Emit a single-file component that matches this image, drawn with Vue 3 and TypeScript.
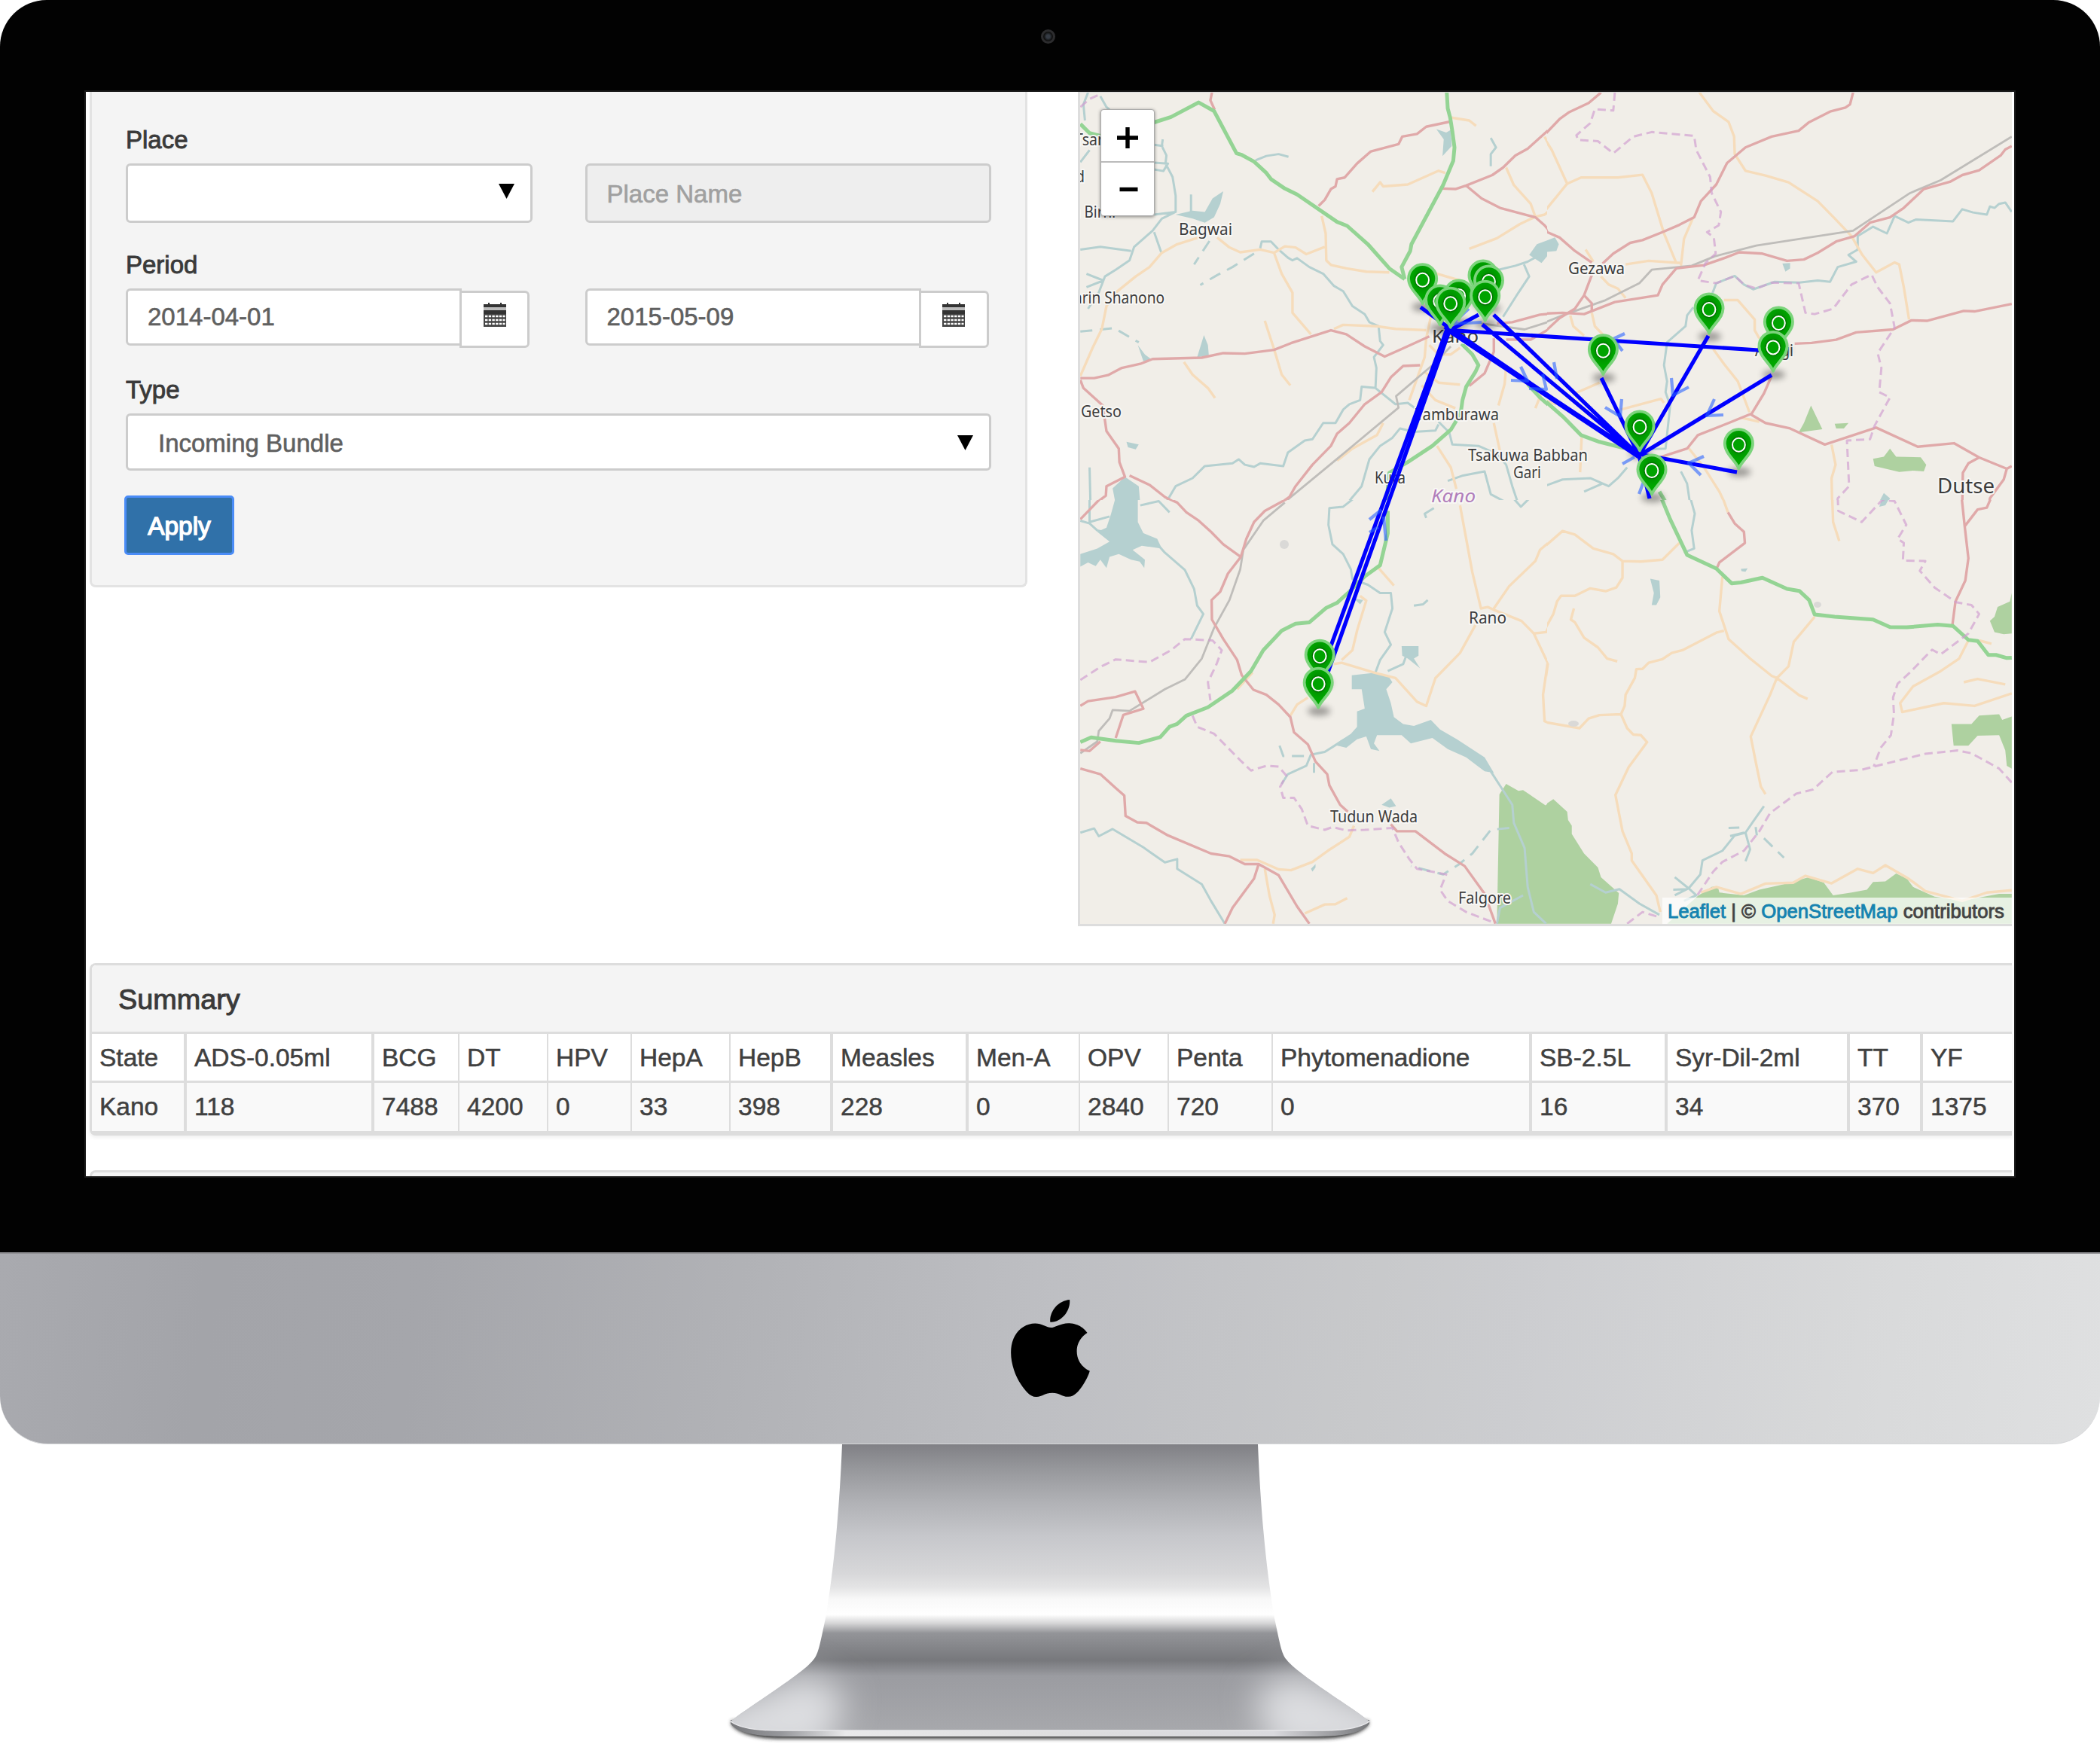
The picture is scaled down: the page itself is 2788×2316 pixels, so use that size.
<script setup lang="ts">
interface Column { name: string; value: string; width: number; thin?: boolean }
interface Tile { id: string; x: number; y: number; sy: number; layers: Record<string, string> }
interface Place { text: string; x: number; y: number; w: number; size?: number; kind?: string }

const columns: Column[] = [
  { name: 'State', value: 'Kano', width: 126 },
  { name: 'ADS-0.05ml', value: '118', width: 249 },
  { name: 'BCG', value: '7488', width: 113, thin: true },
  { name: 'DT', value: '4200', width: 118, thin: true },
  { name: 'HPV', value: '0', width: 111, thin: true },
  { name: 'HepA', value: '33', width: 131, thin: true },
  { name: 'HepB', value: '398', width: 136 },
  { name: 'Measles', value: '228', width: 180 },
  { name: 'Men-A', value: '0', width: 148, thin: true },
  { name: 'OPV', value: '2840', width: 118, thin: true },
  { name: 'Penta', value: '720', width: 138, thin: true },
  { name: 'Phytomenadione', value: '0', width: 344 },
  { name: 'SB-2.5L', value: '16', width: 180 },
  { name: 'Syr-Dil-2ml', value: '34', width: 242 },
  { name: 'TT', value: '370', width: 97 },
  { name: 'YF', value: '1375', width: 118 },
]

// Each tile keeps its own local grid; layers are painted in this order.
const layerOrder = ['forest', 'lake', 'river', 'stream', 'minor', 'rail', 'major', 'trunk', 'border']

const tiles: Tile[] = [
  {
    id: 'nw', x: 1420, y: 110, sy: 0.35714,
    layers: {
      lake: 'M345 490L400 475L440 480L465 430L500 403L490 450L470 500L440 520L400 505ZM1193 172L1225 185L1240 175L1243 235L1213 272L1217 210ZM437 938L450 975L453 1015L415 1020ZM222 975L245 1010L268 1030L240 1035ZM185 1335L225 1345L215 1363L190 1355ZM140 1508L180 1465L225 1500L230 1568L150 1568ZM1495 640L1520 600L1568 580L1568 625L1535 670Z',
      river: 'M60 36L45 80L50 140M100 50L120 90L130 100M605 288L640 272L680 265L712 275M1370 205L1387 240L1370 265L1370 310M303 210L300 235L315 270L312 300L335 350L345 420L345 480L300 505L270 550L210 610L195 660L150 695L115 720L95 780L60 840M275 490L345 480M35 620L100 610L200 625M275 555L298 630M55 710L110 735L55 760M395 415L395 480M275 230L305 235M275 297L320 300L305 328L275 322M35 295L65 250M620 615L625 590L655 590L680 620L710 650L725 660L740 652L780 685L825 710L860 755L890 775L920 830L960 860L975 890L1005 905L1010 960L1020 975L990 1020L998 1060L995 1135L1060 1195L1100 1190L1130 1215M998 1135L950 1130L945 1180L910 1195L890 1215L865 1265L825 1265L790 1325L765 1330L710 1375L695 1425L620 1415L600 1428L570 1420L550 1400L530 1415L440 1425L400 1470L345 1500L310 1568M1200 1270L1190 1293L1120 1298L1075 1285L1050 1320L1010 1350L975 1400L950 1500L900 1568M1200 1260L1235 1300L1245 1345L1330 1350L1390 1380L1420 1420L1440 1500L1460 1568M1230 1480L1280 1460L1350 1445L1370 1530L1420 1560M65 1430L68 1568M1395 695L1450 680L1490 665L1530 640M1478 675L1495 720L1460 780L1410 870',
      stream: 'M455 588L405 675M600 635L530 685L480 715L425 752M35 925L145 912L225 965',
      minor: 'M35 1090L75 985L105 915L120 830L150 780L215 720L260 685L300 632L350 600L420 575M480 575L520 612L555 630L620 620L665 632L700 608L735 612L770 637L830 610M820 495L833 560L835 660L850 677L900 690L965 702L1040 705M665 632L690 710L725 780L725 855L785 935M635 885L665 990L690 1085L718 1125M372 1038L400 1085L450 1135L473 1172M860 915L890 900L1000 905L1060 915L1160 920M985 405L1010 370L1020 385L1100 378L1200 327L1222 335M1235 128L1300 140L1322 160M1420 315L1445 380L1500 450L1515 498L1545 490L1568 468M1515 498L1465 525L1390 578L1300 617M1545 200L1568 250M1190 708L1270 735M1175 870L1160 950L1155 1020L1105 1180M1155 1075L1200 1115L1270 1122M1145 1125L1190 1180L1255 1210M1420 1055L1415 1120L1395 1200M1380 1265L1400 1370M1195 1350L1240 1430L1258 1510M870 1405L920 1360L1000 1310L1020 1265M1270 985L1240 1010L1200 1010L1170 975M1540 1140L1515 1210',
      rail: 'M1240 980L1180 1050L1062 1165L1070 1208L900 1370L690 1568M1340 895L1480 917L1568 885',
      major: 'M463 36L458 65L472 100M810 458L830 435L850 395L865 385L870 358L895 352L935 300L980 255L1070 228L1082 200L1130 190L1160 163L1235 145M1210 393L1255 395L1290 382L1375 343L1410 315L1450 270L1490 245L1568 165M1290 382L1340 430L1400 465L1515 500L1545 530L1568 562M35 1098L80 1098L125 1087L170 1060L230 1045L270 1027L430 1022L500 1005L570 1007L665 993L720 968L850 920L900 935L960 980L1025 1018L1080 990L1170 943M1390 895L1440 890L1530 862L1568 858M35 1105L45 1135L108 1200L120 1295L160 1360L162 1410L180 1465L120 1500L118 1535L80 1568M195 1460L260 1495L310 1540L355 1568M1140 1050L1085 1053L1045 1095L1015 1150L960 1195L910 1265L870 1305L850 1350L790 1420L735 1500L715 1540L680 1568M1380 950L1380 1000L1350 1080L1300 1127M1568 910L1500 955L1420 955',
      trunk: 'M275 147L330 127L420 73L470 105L543 262L560 268L600 293L640 335L655 358L700 393L740 415L870 517L903 532L970 600L1040 690L1090 730M1227 36L1230 95L1238 130L1245 180L1252 240L1248 290L1215 380L1112 600L1108 625L1080 685L1090 730M35 153L65 187L100 197M1275 970L1310 1010L1330 1050L1320 1075L1290 1130L1278 1180L1272 1230L1240 1290L1180 1350L1100 1410L1040 1450L1030 1568M1490 1120L1530 1170L1568 1208',
      border: 'M35 90L65 60L100 42',
    },
  },
  {
    id: 'ne', x: 2050, y: 110, sy: 0.35714,
    layers: {
      forest: 'M868 1200L905 1288L828 1300L845 1265ZM945 1268L990 1265L975 1285L950 1285ZM1070 1398L1105 1390L1125 1360L1145 1390L1225 1392L1243 1420L1235 1445L1200 1442L1155 1447L1075 1425Z',
      lake: 'M0 590L35 575L48 600L40 625L0 630ZM775 672L800 670L800 690L785 702ZM1085 1568L1105 1525L1125 1545L1115 1568Z',
      river: 'M1521 480L1500 445L1480 450L1465 465L1450 460L1440 490L1395 482L1360 470L1330 515L1210 508L1185 520L1140 495L1115 560L1070 535L1020 570L1020 620L990 640L1015 665L955 685L930 740L890 735L830 743L750 740L680 768L650 750L620 718L560 745L545 790M485 835L465 865L460 905L400 965L390 1050L400 1110L395 1150L410 1200L395 1360L350 1362M270 1430L240 1470L210 1500L150 1470L60 1475L0 1500M130 1520L190 1490M445 1445L465 1490L475 1568',
      minor: 'M505 36L550 105L600 145L618 200L620 265L655 327L720 345L795 370L890 440L950 510L1000 570L1035 640L1080 705L1140 668L1155 675L1170 760L1187 880M0 205L25 250L75 375L120 352L240 352L320 342L350 410L390 560L430 670M0 480L75 375M485 500L455 580L445 680M265 675L340 662L445 670M135 620L160 665M185 720L210 750L240 765L265 800M85 865L95 905L130 940M155 855L165 905L190 935M585 808L630 808L685 880L685 920L700 950M550 990L585 1045L630 1110L668 1225M100 1155L180 1115M250 1215L380 1175L390 1190M0 1180L40 1195M640 1245L700 1260M935 1345L948 1420L935 1470L937 1568M470 1358L520 1430L570 1520L590 1568M122 1320L117 1448',
      rail: 'M1521 200L1290 362L1190 410L1005 550L690 605L555 645L480 680L350 695L310 745L200 808L60 865L0 892',
      major: 'M185 36L145 75L80 110L50 135L0 195M1005 36L995 80L980 92L930 107L860 148L828 178L740 200L655 240L595 298L560 378L510 440L488 500L440 528L385 555L320 585L280 595L225 635L190 672M0 525L10 555L50 575L100 625L155 668M155 715L130 790L100 840L50 875L0 928M130 790L155 820L155 850M0 858L60 855L130 860L230 815L370 790L385 750L430 690L520 678L590 650L635 630L710 635L790 662L845 657L890 632L950 590L1010 570L1060 520L1125 500L1170 465L1235 395L1320 368L1360 343L1415 325L1485 270L1500 248L1521 235M815 970L870 967L950 955L1015 928L1135 917L1195 883L1245 885L1365 848L1400 850L1521 822M740 1090L715 1155L675 1230L600 1265L500 1310L465 1360L370 1395M675 1235L720 1265L800 1285L913 1345L1080 1282L1215 1353L1333 1340L1415 1393L1505 1435L1521 1425M1415 1393L1380 1415L1362 1450L1360 1568M1505 1435L1495 1475L1450 1545L1448 1568',
      trunk: 'M0 1180L60 1240L120 1310L180 1335L260 1358M375 1520L400 1568',
      border: 'M230 36L225 103L165 98L150 150L105 195L110 212L175 217L225 262L290 200L350 183L488 197L495 250L540 350L545 410L575 480L568 530L530 555L552 575L558 635L525 670L500 735L560 745L620 718L650 750L690 765L740 743L828 745L850 855L880 860L940 840L1000 750L1065 713L1085 760L1125 820L1140 910L1085 1005L1097 1060L1090 1150L1125 1170L1075 1275L1060 1325L985 1330L992 1500L955 1545L953 1568',
    },
  },
  {
    id: 'sw', x: 1420, y: 660, sy: 0.3699,
    layers: {
      forest: 'M1398 1068L1420 1030L1460 1055L1475 1052L1548 1107L1568 1090L1568 1532L1390 1532Z',
      lake: 'M150 0L222 0L222 90L240 130L285 150L300 185L235 175L205 190L245 225L243 255L228 232L200 225L160 205L130 215L120 255L100 225L85 248L60 235L35 250L35 205L90 185L130 160L90 125L120 110L135 60ZM918 640L985 632L1035 640L1050 665L1030 690L1045 740L1055 790L1085 815L1120 822L1175 800L1205 835L1260 870L1350 935L1380 990L1350 985L1290 935L1230 905L1180 865L1110 885L1080 855L1000 855L990 885L1008 912L980 905L965 860L935 870L900 900L860 890L915 850L935 825L935 770L960 760L950 690L918 690ZM1080 535L1135 535L1135 570L1120 580L1140 615L1100 580L1082 570ZM1015 1105L1045 1082L1062 1110L1040 1115ZM785 1335L800 1318L800 1330L790 1345ZM925 365L955 370L945 385Z',
      river: 'M930 0L890 35L845 40L842 100L855 170L890 205L915 260L920 295L970 315L1010 345L1045 345L1050 400L1025 485L1045 530L1010 585L995 630M1185 40L1155 60L1160 75M1120 390L1150 385L1165 370M270 150L310 200L375 262L405 330L415 390L435 420L395 510M230 30L290 15L325 55M35 85L65 95L90 120L130 130M65 0L65 90L130 70M35 1205L80 1190L95 1218L140 1192L240 1258L310 1312L350 1300L350 1335L430 1390L460 1450L505 1532M895 870L830 915L785 925L770 965L710 995L690 1030M795 955L795 990M1370 985L1405 1045L1440 1105L1445 1170L1480 1260L1490 1400L1510 1490L1550 1532M1035 625L1085 600L1095 570M1375 0L1440 0L1468 35L1500 0M1390 1532L1400 1475L1475 1430',
      stream: 'M683 893L695 930L765 930M1430 1188L1370 1195L1310 1280L1265 1320L1215 1355L1110 1325',
      minor: 'M1270 30L1285 120L1310 270L1338 400L1360 395L1380 405L1470 445L1510 490L1555 595L1540 710L1545 805L1568 815M1380 400L1430 320L1515 230L1530 190L1568 155M1510 490L1550 485L1568 445M1320 460L1270 560L1190 650L1160 750L1130 735L1060 650L990 630L885 595L860 600M945 355L965 372L935 480L920 550L885 585M775 720L740 745L718 785M1005 255L1055 318M595 630L545 690M555 1303L610 1303L680 1337L720 1340L790 1310L840 1270L910 1220L925 1180M635 1335L650 1430L667 1500L662 1532M765 1495L830 1463L865 1462L903 1440',
      rail: 'M700 20L630 85L565 190L555 260L520 370L470 470L430 580L375 655L310 690L195 768L140 765L130 795L95 840L90 878L35 920',
      major: 'M310 0L350 20L380 55L420 85L460 125L500 170L557 215M105 0L35 80M718 0L635 50L600 90L575 150L557 215L515 275L490 340L462 370L463 440L500 510L545 585L560 640L598 692L640 710L680 745L718 790L730 845L775 888L800 950L838 995L845 1035L880 1105L905 1130M1045 1175L1065 1200L1125 1200L1220 1280L1285 1325L1350 1425L1385 1532M35 975L100 995L150 1045L178 1072L182 1145L220 1168L250 1170L320 1215L460 1280L520 1290L570 1318L615 1318L680 1358L740 1470L780 1532M615 1318L600 1370L530 1475L505 1532M35 750L60 733L150 718L213 698L240 760L175 782L150 865M100 878L65 912L35 908',
      trunk: 'M1035 50L1035 130L1010 245L960 285L910 340L870 380L835 398L780 450L735 455L690 480L630 550L590 625L530 695L450 755L380 785L350 815L325 825L295 862L225 883L150 875L70 863L35 880',
      border: 'M35 657L100 610L150 583L260 593L330 550L375 510L465 515L495 550L478 600L450 665L458 730M400 785L415 825L470 850L555 945L590 982L640 965L680 968L705 1000L685 1040L695 1080L730 1080L755 1120L775 1180L830 1195L855 1185L900 1197L960 1195L1050 1188L1070 1240L1105 1300L1130 1335L1225 1355L1205 1410L1230 1450L1290 1490L1385 1530',
    },
  },
  {
    id: 'se', x: 2050, y: 660, sy: 0.3699,
    layers: {
      forest: 'M0 1107L30 1085L75 1130L78 1160L90 1180L90 1210L130 1280L175 1330L185 1365L243 1422L240 1460L218 1532L0 1532ZM1521 345L1515 375L1475 395L1465 430L1450 445L1465 485L1495 493L1521 490ZM1325 815L1390 815L1415 785L1480 780L1490 800L1521 788L1521 975L1505 965L1500 910L1480 855L1410 857L1380 893L1332 893ZM500 1432L545 1400L565 1398L570 1420L650 1430L700 1410L780 1390L860 1365L910 1385L940 1430L1000 1420L1050 1410L1070 1382L1110 1380L1145 1352L1180 1370L1200 1400L1270 1435L1360 1450L1480 1425L1521 1425L1521 1532L400 1532Z',
      lake: 'M345 293L375 300L378 360L365 388L350 388L357 345ZM640 258L662 256L655 268L642 266ZM1090 35L1100 5L1125 0L1110 30Z',
      river: 'M475 0L490 60L480 120L488 185L455 200M715 1110L680 1165L655 1205L620 1215L580 1270L515 1305L508 1355L470 1405L425 1430M655 1205L670 1265L655 1308M600 1188L635 1187M605 1217L650 1205M688 1185L692 1215M425 1365L470 1405L495 1430L455 1450M420 1410L465 1408M150 1390L200 1420L245 1408L310 1460L375 1500',
      stream: 'M715 1225L780 1295',
      minor: 'M0 180L60 122L100 135L160 185L225 205L255 230L315 232L385 225L440 165M255 230L255 290L235 325L200 338L150 328L100 355L55 355L42 375L30 420L0 480M97 400L87 440L100 450L130 505L175 540L205 580L238 590M580 0L598 55M580 285L570 410L600 510L670 580L740 642L757 650L830 712L857 725M585 480L560 487L450 550L415 560L385 582L340 595L320 617L300 618L295 650L265 710L262 750L250 780L180 783L145 795L115 830L0 808M250 780L270 830L290 853L315 855L335 880L275 970L232 1070L255 1200L285 1280L285 1305L365 1430L378 1490M880 430L812 520L795 608L757 650L735 710L672 860L690 960L705 1040L720 1067M937 0L940 90L960 158M1380 515L1350 580L1290 625L1200 680L1158 740L1165 772L1300 740L1400 750L1521 705M1365 665L1410 653L1500 673M1415 515L1455 527M510 1420L560 1400L640 1425L720 1388L810 1385L850 1360L935 1387L1020 1335L1070 1350L1110 1322L1185 1370L1240 1415L1360 1450L1440 1420L1521 1412M0 575L12 600L0 690L5 740L0 808',
      major: 'M598 55L620 95L650 125L653 165L570 235L562 255M1358 0L1368 105L1380 220L1370 300L1338 375L1328 460M1455 0L1440 38L1410 45L1368 105',
      trunk: 'M380 0L410 80L465 208L560 257L610 310L640 307L710 290L790 330L830 337L862 370L880 422L945 430L1070 440L1125 467L1180 468L1280 458L1330 463L1380 513L1410 517L1445 567L1470 567L1505 578L1521 577',
      border: 'M955 0L957 50L1033 90L1100 10L1140 15L1178 100L1150 150L1170 165L1167 228L1240 230L1222 265L1270 325L1340 378L1390 388L1415 420L1380 490L1290 565L1262 548L1190 630L1150 670L1135 720L1138 780L1128 855L1095 900L1072 968M1521 1025L1480 975L1390 920L1345 910L1240 922L1072 968L1030 980L938 987L875 1050L820 1065L735 1135L700 1200L650 1270L580 1310L550 1345L495 1435M270 1532L320 1490L378 1510',
    },
  },
]

const places: Place[] = [
  { text: 'Tsan', x: 1427, y: 193, w: 42 },
  { text: 'd', x: 1428, y: 242, w: 12 },
  { text: 'n Birni', x: 1423, y: 288.5, w: 58 },
  { text: 'Bagwai', x: 1565, y: 312, w: 71 },
  { text: 'arin Shanono', x: 1426, y: 403, w: 120 },
  { text: 'Getso', x: 1435, y: 553.5, w: 54 },
  { text: 'Tamburawa', x: 1879, y: 557.5, w: 111 },
  { text: 'Kura', x: 1825, y: 641.5, w: 41 },
  { text: 'Kano', x: 1901, y: 455, w: 62, size: 24 },
  { text: 'Tsakuwa Babban', x: 1949, y: 612, w: 159 },
  { text: 'Gari', x: 2009, y: 635, w: 37 },
  { text: 'Kano', x: 1900, y: 667, w: 59, size: 24, kind: 'region' },
  { text: 'Gezawa', x: 2082, y: 363.5, w: 75 },
  { text: 'Ajingi', x: 2330, y: 473, w: 51 },
  { text: 'Dutse', x: 2572, y: 654.5, w: 76, size: 28 },
  { text: 'Rano', x: 1950, y: 827.5, w: 50 },
  { text: 'Tudun Wada', x: 1766, y: 1091.5, w: 116 },
  { text: 'Falgore', x: 1936, y: 1200, w: 70 },
]

const routes =
  'M1918 438L2350 466M2268 446L2176 605M2352 498L2176 605M2126 502L2176 605M2306 627L2176 603M2190 662L2176 605' +
  'M1918 434L2176 605M1926 441L2176 607M1886 408L1926 437L2176 607M1968 431L2176 605M1983 418L2176 605' +
  'M1926 438L1963 418M1748 935L1924 440M1747 912L1920 440'

const arrows =
  'M2157 443L2142 450L2154 466M2219 502L2221 525L2242 514M2276 530L2266 552L2288 551M2131 541L2151 553L2153 530' +
  'M2262 606L2242 615L2258 631M2176 656L2182 640M2063 481L2067 503M2154 616L2170 607M2006 505L2028 506L2019 487' +
  'M2030 516L2053 517L2048 497M1950 410L1928 430L1967 428M1818 690L1834 677M1818 707L1830 700M1840 718L1837 686'

const pins: [number, number][] = [
  [1888.6, 371.8], [1969, 367], [1976.5, 374], [1936.7, 393], [1911.7, 400], [1971.7, 394.3], [1925.7, 403.3],
  [2269, 411], [2128.4, 465.7], [2361.4, 429], [2354, 461.4], [2177, 567], [2308.4, 590.7], [2193, 625],
  [1752.2, 871.2], [1750.2, 908.2],
]
</script>

<template>
  <div class="imac">
    <div class="bezel">
      <i class="camera"></i>
      <div class="screen">
        <div class="top">
          <form class="filters">
            <div class="group">
              <label>Place</label>
              <div class="fields">
                <div class="control half tall"><svg class="caret" viewBox="0 0 21 20"><path d="M0 0H21L10.5 20Z" /></svg></div>
                <div class="control half tall disabled">Place Name</div>
              </div>
            </div>
            <div class="group">
              <label>Period</label>
              <div class="fields">
                <div v-for="d in ['2014-04-01', '2015-05-09']" :key="d" class="date">
                  <div class="control">{{ d }}</div>
                  <div class="picker">
                    <svg viewBox="0 0 30 32">
                      <path fill="#333" d="M0 2H6V0H8V2H22V0H24V2H30V6H0Z" />
                      <path fill="#bbb" d="M0 6H30V10H0Z" />
                      <path fill="#333" d="M0 10H30V15H0Z" />
                      <path fill="#444" d="M0 15H30V32H0Z" />
                      <path stroke="#fff" stroke-width="2.6" stroke-dasharray="3.4 1.3" d="M2 18H28.5M2 23H28.5M2 28H28.5" />
                    </svg>
                  </div>
                </div>
              </div>
            </div>
            <div class="group last">
              <label>Type</label>
              <div class="control type">Incoming Bundle<svg class="caret" viewBox="0 0 21 20"><path d="M0 0H21L10.5 20Z" /></svg></div>
            </div>
            <button type="button">Apply</button>
          </form>

          <div class="map">
            <svg class="canvas" viewBox="1434 123 1237 1104">
              <defs>
                <filter id="soft" x="-50%" y="-80%" width="200%" height="260%"><feGaussianBlur stdDeviation="4" /></filter>
                <radialGradient id="pinFill" cx=".5" cy=".38" r=".5">
                  <stop offset=".35" stop-color="#008f00" /><stop offset=".8" stop-color="#00a600" />
                </radialGradient>
                <clipPath v-for="t in tiles" :id="'clip-' + t.id" :key="t.id">
                  <rect :x="t.id[1] === 'w' ? 1420 : 2054" :y="t.id[0] === 'n' ? 110 : 664" width="634" :height="t.id[0] === 'n' ? 554 : 572" />
                </clipPath>
              </defs>
              <template v-for="layer in layerOrder" :key="layer">
                <g v-for="t in tiles" :key="t.id" :clip-path="`url(#clip-${t.id})`">
                  <path
                    v-if="t.layers[layer]" :class="layer" :d="t.layers[layer]" vector-effect="non-scaling-stroke"
                    :transform="`translate(${t.x} ${t.y}) scale(.40816 ${t.sy})`"
                  />
                </g>
              </template>
              <g fill="#dad9d7">
                <ellipse cx="1705" cy="723" rx="6" ry="6" /><ellipse cx="2089" cy="961" rx="7" ry="4" /><ellipse cx="2413" cy="803" rx="5" ry="4" />
              </g>
              <text
                v-for="p in places" :key="p.text + p.y" :class="['place', p.kind]" :x="p.x" :y="p.y"
                :textLength="p.w" lengthAdjust="spacingAndGlyphs" :font-size="p.size ?? 21"
              >{{ p.text }}</text>
              <ellipse v-for="(p, i) in pins" :key="'s' + i" :cx="p[0] + 1" :cy="p[1] + 36" rx="15" ry="6" fill="#000" opacity=".36" filter="url(#soft)" />
              <path class="route" :d="routes" />
              <path class="arrow" :d="arrows" />
              <path class="route" d="M1749 930V936" />
              <g v-for="(p, i) in pins" :key="i" :transform="`translate(${p[0]} ${p[1]})`">
                <path fill="url(#pinFill)" stroke="#7cd47c" stroke-width="3.8" d="M0 31.5C-3 22-18.6 12-18.6-1.6A18.6 19 0 0 1 18.6-1.6C18.6 12 3 22 0 31.5Z" />
                <ellipse rx="9" ry="9.6" fill="#0a0" stroke="#006d00" stroke-width="3.4" opacity=".75" />
                <ellipse rx="8.4" ry="9" fill="#00a300" stroke="#fff" stroke-width="2" />
              </g>
            </svg>
            <div class="zoom">
              <span><svg viewBox="0 0 28 28"><path d="M0 14H28M14 0V28" /></svg></span>
              <span><svg viewBox="0 0 28 28"><path d="M3.5 13.5H27.5" /></svg></span>
            </div>
            <div class="credit"><a>Leaflet</a> | © <a>OpenStreetMap</a> contributors</div>
          </div>
        </div>

        <section class="summary">
          <h3>Summary</h3>
          <table>
            <colgroup><col v-for="c in columns" :key="c.name" :style="{ width: c.width + 'px' }" /></colgroup>
            <tbody>
              <tr><td v-for="c in columns" :key="c.name" :class="{ thin: c.thin }">{{ c.name }}</td></tr>
              <tr class="odd"><td v-for="c in columns" :key="c.name" :class="{ thin: c.thin }">{{ c.value }}</td></tr>
            </tbody>
          </table>
        </section>
        <section class="next"></section>
      </div>
    </div>
    <div class="chin">
      <svg viewBox="2.2 0 19.6 24" preserveAspectRatio="none">
        <path d="M12.152 6.896c-.948 0-2.415-1.078-3.96-1.04-2.04.027-3.91 1.183-4.961 3.014-2.117 3.675-.546 9.103 1.519 12.09 1.013 1.454 2.208 3.09 3.792 3.039 1.52-.065 2.09-.987 3.935-.987 1.831 0 2.35.987 3.96.948 1.637-.026 2.676-1.48 3.676-2.948 1.156-1.688 1.636-3.325 1.662-3.415-.039-.013-3.182-1.221-3.22-4.857-.026-3.04 2.48-4.494 2.597-4.559-1.429-2.09-3.623-2.324-4.39-2.376-2-.156-3.675 1.09-4.61 1.09zM15.53 3.83c.843-1.012 1.4-2.427 1.245-3.83-1.207.052-2.662.805-3.532 1.818-.78.896-1.454 2.338-1.273 3.714 1.338.104 2.715-.688 3.559-1.701" />
      </svg>
    </div>
    <svg class="stand" viewBox="960 1918 868 398">
      <defs>
        <linearGradient id="neck" gradientUnits="userSpaceOnUse" x1="0" y1="1918" x2="0" y2="2298">
          <stop offset="0" stop-color="#808085" /><stop offset=".08" stop-color="#95969a" /><stop offset=".2" stop-color="#b0b1b5" />
          <stop offset=".32" stop-color="#c6c7cb" /><stop offset=".45" stop-color="#d7d7d9" /><stop offset=".5" stop-color="#e4e4e5" />
          <stop offset=".54" stop-color="#f8f8f8" /><stop offset=".595" stop-color="#fff" /><stop offset=".625" stop-color="#d6d6d7" />
          <stop offset=".66" stop-color="#939498" /><stop offset=".755" stop-color="#77787c" /><stop offset=".81" stop-color="#9b9ca1" />
          <stop offset="1" stop-color="#a7a8ac" />
        </linearGradient>
        <linearGradient id="lip" x1="0" x2="1" y1="0" y2="0">
          <stop offset="0" stop-color="#77787b" /><stop offset=".08" stop-color="#97989c" /><stop offset=".18" stop-color="#e9e9ea" />
          <stop offset=".5" stop-color="#dededf" /><stop offset=".85" stop-color="#d9d9dd" /><stop offset="1" stop-color="#77787b" />
        </linearGradient>
        <filter id="glow" x="-60%" y="-60%" width="220%" height="220%"><feGaussianBlur stdDeviation="22" /></filter>
        <filter id="floor" x="-5%" y="-60%" width="110%" height="260%"><feGaussianBlur stdDeviation="2.5" /></filter>
        <clipPath id="foot"><path d="M1118 1918H1670C1674 2015 1682 2090 1692 2149C1699 2181 1701 2196 1708 2204C1722 2223 1795 2267 1818 2286C1806 2295 1784 2298 1756 2298H1032C1004 2298 982 2295 970 2286C993 2267 1066 2223 1080 2204C1087 2196 1089 2181 1096 2149C1106 2090 1114 2015 1118 1918Z" /></clipPath>
      </defs>
      <path d="M971 2290Q985 2309 1040 2309H1748Q1803 2309 1817 2290V2285H971Z" fill="#333" filter="url(#floor)" />
      <path d="M970 2284V2289Q982 2306 1040 2306H1748Q1806 2306 1818 2289V2284Z" fill="url(#lip)" />
      <g clip-path="url(#foot)">
        <path d="M960 1918H1828V2300H960Z" fill="url(#neck)" />
        <path d="M1070 2222L930 2285L940 2330H1095L1125 2250Z" fill="#dcdde0" filter="url(#glow)" />
        <path d="M1718 2222L1858 2285L1848 2330H1693L1663 2250Z" fill="#dcdde0" filter="url(#glow)" />
      </g>
      <path d="M970 2286C982 2295 1004 2298 1032 2298H1756C1784 2298 1806 2295 1818 2286" fill="none" stroke="#e6e6e9" stroke-width="1.5" />
    </svg>
  </div>
</template>

<style>
body { margin: 0; background: #fff; }
</style>

<style scoped>
* { box-sizing: border-box; }
.imac { width: 2788px; height: 2316px; overflow: hidden; display: flex; flex-direction: column; align-items: center; background: #fff; font: 33px "Liberation Sans", Arial, sans-serif; color: #444; }
.bezel { position: relative; width: 2788px; height: 1663px; flex: none; padding: 122px 114px 101px; background: #020202; border-radius: 62px 62px 0 0; }
.camera { position: absolute; left: 1382px; top: 39px; width: 19px; height: 19px; border-radius: 50%; border: 3px solid #2c2c2e; background: radial-gradient(#353b44 0 25%, #111 60%); }
.screen { width: 2560px; height: 1440px; overflow: hidden; background: #fff; box-shadow: 0 0 0 2px #1a1a1a; }
.top { display: flex; height: 1157px; align-items: flex-start; }

.filters { width: 1245px; height: 658px; margin-left: 5px; padding: 43px 45px 0; background: #f4f4f4; border: 3px solid #e3e3e3; border-top: 0; border-radius: 0 0 8px 8px; }
.group { height: 166px; }
.group.last { height: 161px; }
label { display: block; height: 40px; line-height: 42px; margin-bottom: 12px; color: #3a3a3a; -webkit-text-stroke: .9px #3a3a3a; }
.fields { display: flex; gap: 70px; align-items: flex-start; }
.control { display: flex; align-items: center; height: 76px; padding: 0 26px; background: #fff; border: 3px solid #ccc; border-radius: 6px; color: #606060; -webkit-text-stroke: .6px; }
.half { width: 540px; }
.tall { height: 79px; }
.disabled { background: #eee; color: #a0a0a0; padding-top: 2px; }
.type { width: 1149px; padding: 4px 21px 0 40px; }
.caret { width: 21px; height: 20px; margin-left: auto; margin-bottom: 3px; }
.tall .caret { margin-right: -5px; margin-bottom: 6px; }
.date { display: flex; width: 540px; align-items: flex-start; }
.date .control { width: 446px; border-radius: 6px 0 0 6px; }
.picker { width: 93px; height: 76px; margin: 3px 0 0 -3px; padding-top: 13px; text-align: center; background: #fff; border: 3px solid #ccc; border-radius: 0 6px 6px 0; }
.picker svg { display: block; width: 30px; height: 32px; margin: 0 auto; }
button { display: block; width: 146px; height: 79px; margin-left: -2px; padding: 2px 0 0; font: 33.4px "Liberation Sans", Arial, sans-serif; color: #fff; -webkit-text-stroke: 1.4px #fff; background: #3071a9; border: 3px solid #4a8cf7; border-radius: 5px; }

.map { position: relative; width: 1240px; height: 1108px; margin-left: 67px; background: #f1eee8; border: solid #ddd; border-width: 1px 0 3px 3px; }
.canvas { display: block; width: 1237px; height: 1104px; }
.canvas path { fill: none; stroke-linejoin: round; }
.canvas path.forest { fill: #aed1a0; }
.canvas path.lake { fill: #b5d0d0; }
.river { stroke: #b5d0d0; stroke-width: 3; }
.stream { stroke: #b5d0d0; stroke-width: 3; stroke-dasharray: 16 10; }
.minor { stroke: #f6dcbb; stroke-width: 3.4; }
.rail { stroke: #bfbdba; stroke-width: 2.8; }
.major { stroke: #e0a9a9; stroke-width: 3.4; }
.trunk { stroke: #94d494; stroke-width: 5; }
.border { stroke: #cf9bcf; stroke-opacity: .65; stroke-width: 3; stroke-dasharray: 11 6; }
.canvas g > path[stroke="#7cd47c"] { fill: url(#pinFill); }
.route { stroke: #00f; stroke-width: 5.2; }
.arrow { stroke: #2a62ff; stroke-opacity: .6; stroke-width: 4.2; }
.place { font-family: "Noto Sans", "Open Sans", sans-serif; fill: #3c3c3c; stroke: #f8f7f4; stroke-width: 4px; paint-order: stroke; stroke-linejoin: round; }
.region { fill: #b07dbb; font-style: italic; }
.zoom { position: absolute; left: 27px; top: 22px; width: 72px; height: 142px; background: #fff; border: 1px solid #aaa; border-radius: 4px; box-shadow: 0 1px 4px rgba(0, 0, 0, .45); }
.zoom span { display: flex; height: 70px; align-items: center; justify-content: center; padding-top: 2px; }
.zoom span:first-child { height: 70px; padding-top: 6px; border-bottom: 2px solid #bbb; }
.zoom svg { width: 28px; height: 28px; fill: none; stroke: #000; stroke-width: 5.4; }
.credit { position: absolute; right: 0; bottom: 0; width: 464px; height: 35px; line-height: 36px; padding-left: 7px; white-space: nowrap; font-size: 25.7px; color: #444; background: rgba(255, 255, 255, .7); -webkit-text-stroke: .9px; }
.credit a { color: #1583b0; }

.summary { width: 2552px; height: 229px; margin-left: 5px; border: solid #ddd; border-width: 3px 0 6px 3px; border-radius: 8px 0 0 8px; background: #fff; box-shadow: 0 3px 4px rgba(0, 0, 0, .06); }
h3 { height: 91px; margin: 0; padding-left: 35px; line-height: 90px; font-size: 37.8px; font-weight: 400; color: #3a3a3a; -webkit-text-stroke: 1px #3a3a3a; background: #f4f4f4; border-bottom: 3px solid #ddd; border-radius: 6px 0 0 0; }
table { width: 2549px; table-layout: fixed; border-spacing: 0; font-size: 33.5px; color: #404040; -webkit-text-stroke: .5px; }
td { height: 65px; padding: 2px 0 0 10px; line-height: 60px; white-space: nowrap; border-right: 4px solid #ddd; border-bottom: 3px solid #ddd; }
td.thin { border-right-width: 2px; }
td:last-child { border-right: 0; }
.odd td { height: 64px; background: #f9f9f9; border-bottom: 0; padding-top: 0; }
.next { width: 2552px; height: 20px; margin: 46px 0 0 5px; background: #f4f4f4; border: solid #ddd; border-width: 3px 0 0 3px; border-radius: 8px 0 0 0; }

.chin { width: 2788px; height: 255px; flex: none; display: flex; justify-content: center; padding-top: 61px; border-top: 2px solid #8f8f92; border-bottom: 1px solid #d5d6d8; border-radius: 0 0 64px 64px; background: linear-gradient(97deg, #a9aaaf 0%, #a3a4a9 10%, #a5a6ab 20%, #b1b2b6 35%, #bebfc3 50%, #c8c9cb 65%, #cccdd0 72%, #d8d9da 88%, #dfe0e1 100%); }
.chin svg { width: 105px; height: 129px; }
.stand { width: 868px; height: 398px; flex: none; }
</style>
